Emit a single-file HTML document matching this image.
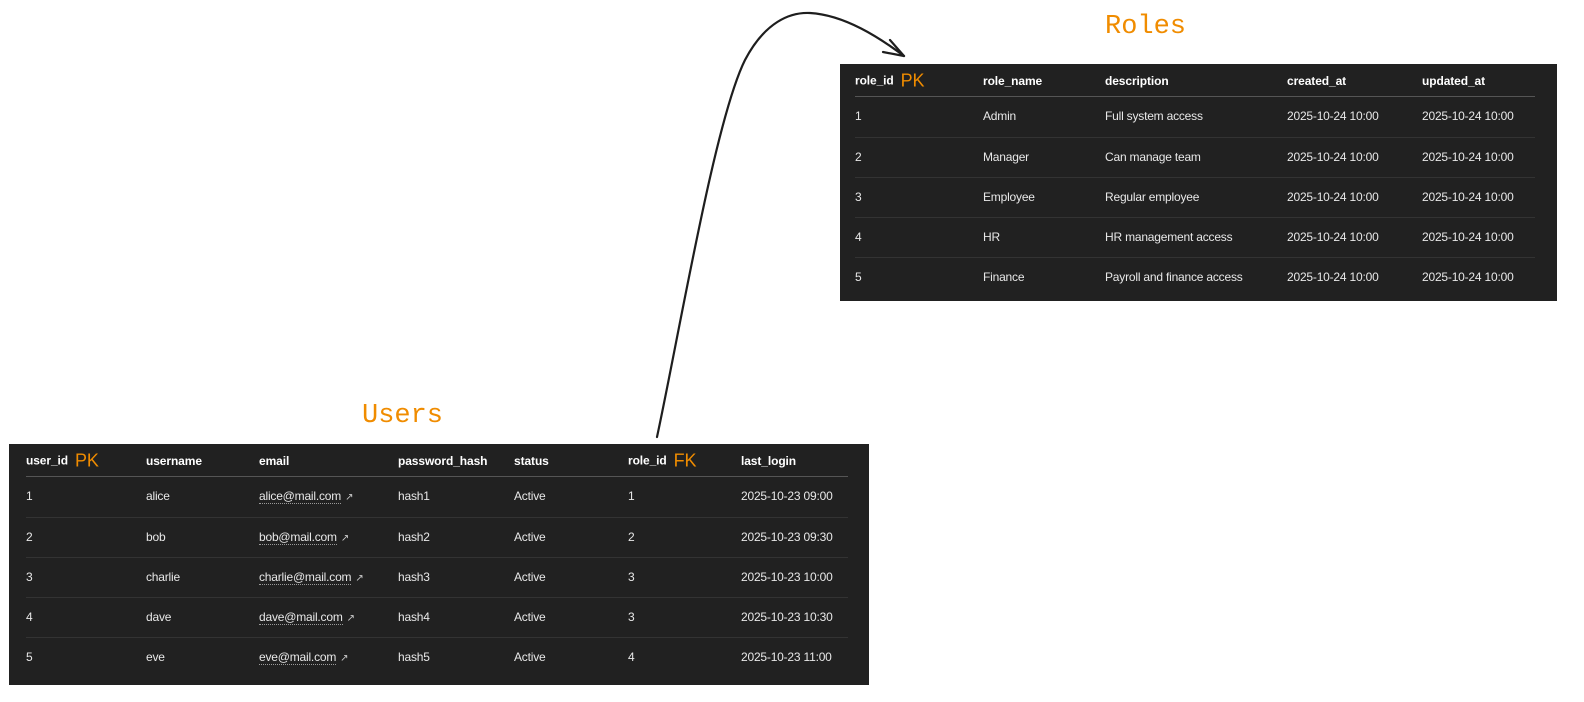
<!DOCTYPE html>
<html><head><meta charset="utf-8"><style>
body{margin:0;width:1584px;height:702px;background:#fff;position:relative;overflow:hidden;font-family:"Liberation Sans",sans-serif}
.t{position:absolute;background:#212121;color:#e8e8e8;font-size:12px}
.c{position:absolute;white-space:nowrap;transform:translateY(-50%);letter-spacing:-0.2px}
.h{color:#fff;font-weight:bold;font-size:12px;letter-spacing:-0.1px}
.sep{position:absolute;height:1px;background:#333}
.hs{background:#555}
.k{color:#f08c00;font-size:18px;font-weight:normal;margin-left:7px;vertical-align:-2px}
.ttl{position:absolute;color:#f08c00;font-family:"Liberation Mono",monospace;font-size:27px}
.em{border-bottom:1px dotted #999}
.ar{font-size:10px;margin-left:4px;color:#ccc}
</style></head><body>
<div class="ttl" style="left:1105px;top:12px">Roles</div>
<div class="ttl" style="left:362px;top:401px">Users</div>
<svg width="1584" height="702" style="position:absolute;left:0;top:0" fill="none" stroke="#1e1e1e" stroke-width="2.2" stroke-linecap="round">
<path d="M657,437 C680,330 715,120 745,60 C765,22 790,12 810,13 C845,15 880,38 904,56"/>
<path d="M904,56 L883,52 M904,56 L890,40"/>
</svg>

<div class="t" style="left:840px;top:64px;width:717px;height:237px">
<div class="sep hs" style="left:15px;width:680px;top:32px"></div>
<div class="sep" style="left:15px;width:680px;top:73px"></div>
<div class="sep" style="left:15px;width:680px;top:113px"></div>
<div class="sep" style="left:15px;width:680px;top:153px"></div>
<div class="sep" style="left:15px;width:680px;top:193px"></div>
<div class="c h" style="left:15px;top:17px">role_id<span class="k">PK</span></div>
<div class="c h" style="left:143px;top:17px">role_name</div>
<div class="c h" style="left:265px;top:17px">description</div>
<div class="c h" style="left:447px;top:17px">created_at</div>
<div class="c h" style="left:582px;top:17px">updated_at</div>

<div class="c" style="left:15px;top:52px">1</div><div class="c" style="left:143px;top:52px">Admin</div><div class="c" style="left:265px;top:52px">Full system access</div><div class="c" style="left:447px;top:52px">2025-10-24 10:00</div><div class="c" style="left:582px;top:52px">2025-10-24 10:00</div>
<div class="c" style="left:15px;top:93px">2</div><div class="c" style="left:143px;top:93px">Manager</div><div class="c" style="left:265px;top:93px">Can manage team</div><div class="c" style="left:447px;top:93px">2025-10-24 10:00</div><div class="c" style="left:582px;top:93px">2025-10-24 10:00</div>
<div class="c" style="left:15px;top:133px">3</div><div class="c" style="left:143px;top:133px">Employee</div><div class="c" style="left:265px;top:133px">Regular employee</div><div class="c" style="left:447px;top:133px">2025-10-24 10:00</div><div class="c" style="left:582px;top:133px">2025-10-24 10:00</div>
<div class="c" style="left:15px;top:173px">4</div><div class="c" style="left:143px;top:173px">HR</div><div class="c" style="left:265px;top:173px">HR management access</div><div class="c" style="left:447px;top:173px">2025-10-24 10:00</div><div class="c" style="left:582px;top:173px">2025-10-24 10:00</div>
<div class="c" style="left:15px;top:213px">5</div><div class="c" style="left:143px;top:213px">Finance</div><div class="c" style="left:265px;top:213px">Payroll and finance access</div><div class="c" style="left:447px;top:213px">2025-10-24 10:00</div><div class="c" style="left:582px;top:213px">2025-10-24 10:00</div>
</div>

<div class="t" style="left:9px;top:444px;width:860px;height:241px">
<div class="sep hs" style="left:17px;width:822px;top:32px"></div>
<div class="sep" style="left:17px;width:822px;top:73px"></div>
<div class="sep" style="left:17px;width:822px;top:113px"></div>
<div class="sep" style="left:17px;width:822px;top:153px"></div>
<div class="sep" style="left:17px;width:822px;top:193px"></div>
<div class="c h" style="left:17px;top:17px">user_id<span class="k">PK</span></div>
<div class="c h" style="left:137px;top:17px">username</div>
<div class="c h" style="left:250px;top:17px">email</div>
<div class="c h" style="left:389px;top:17px">password_hash</div>
<div class="c h" style="left:505px;top:17px">status</div>
<div class="c h" style="left:619px;top:17px">role_id<span class="k">FK</span></div>
<div class="c h" style="left:732px;top:17px">last_login</div>

<div class="c" style="left:17px;top:52px">1</div><div class="c" style="left:137px;top:52px">alice</div><div class="c" style="left:250px;top:52px"><span class="em">alice@mail.com</span><span class="ar">↗</span></div><div class="c" style="left:389px;top:52px">hash1</div><div class="c" style="left:505px;top:52px">Active</div><div class="c" style="left:619px;top:52px">1</div><div class="c" style="left:732px;top:52px">2025-10-23 09:00</div>
<div class="c" style="left:17px;top:93px">2</div><div class="c" style="left:137px;top:93px">bob</div><div class="c" style="left:250px;top:93px"><span class="em">bob@mail.com</span><span class="ar">↗</span></div><div class="c" style="left:389px;top:93px">hash2</div><div class="c" style="left:505px;top:93px">Active</div><div class="c" style="left:619px;top:93px">2</div><div class="c" style="left:732px;top:93px">2025-10-23 09:30</div>
<div class="c" style="left:17px;top:133px">3</div><div class="c" style="left:137px;top:133px">charlie</div><div class="c" style="left:250px;top:133px"><span class="em">charlie@mail.com</span><span class="ar">↗</span></div><div class="c" style="left:389px;top:133px">hash3</div><div class="c" style="left:505px;top:133px">Active</div><div class="c" style="left:619px;top:133px">3</div><div class="c" style="left:732px;top:133px">2025-10-23 10:00</div>
<div class="c" style="left:17px;top:173px">4</div><div class="c" style="left:137px;top:173px">dave</div><div class="c" style="left:250px;top:173px"><span class="em">dave@mail.com</span><span class="ar">↗</span></div><div class="c" style="left:389px;top:173px">hash4</div><div class="c" style="left:505px;top:173px">Active</div><div class="c" style="left:619px;top:173px">3</div><div class="c" style="left:732px;top:173px">2025-10-23 10:30</div>
<div class="c" style="left:17px;top:213px">5</div><div class="c" style="left:137px;top:213px">eve</div><div class="c" style="left:250px;top:213px"><span class="em">eve@mail.com</span><span class="ar">↗</span></div><div class="c" style="left:389px;top:213px">hash5</div><div class="c" style="left:505px;top:213px">Active</div><div class="c" style="left:619px;top:213px">4</div><div class="c" style="left:732px;top:213px">2025-10-23 11:00</div>
</div>
</body></html>
